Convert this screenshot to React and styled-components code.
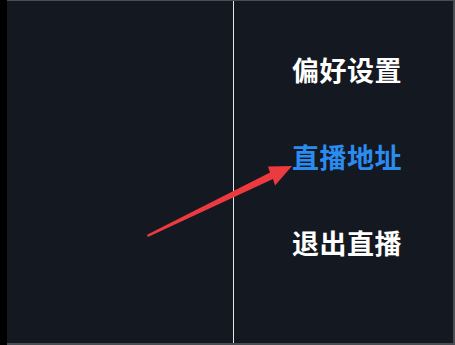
import React from 'react';
import styled, { createGlobalStyle } from 'styled-components';

const GlobalStyle = createGlobalStyle`
  html, body {
    margin: 0;
    padding: 0;
    background: #000;
  }
  #root {
    width: 455px;
    height: 345px;
  }
`;

const Frame = styled.div`
  position: relative;
  display: flex;
  width: 455px;
  height: 345px;
  background: #000;
  font-family: "Noto Sans CJK SC", "Noto Sans", sans-serif;
`;

const Gutter = styled.div`
  width: 7px;
  background: #000;
`;

const Screen = styled.div`
  flex: 1;
  display: flex;
  background: #141820;
  border-top: 1px solid #4a4d52;
  border-right: 2px solid #4a4d52;
  border-bottom: 2px solid #4a4d52;
`;

const LeftPane = styled.div`
  width: 226px;
  border-right: 1px solid #e6e6e6;
`;

const Menu = styled.ul`
  list-style: none;
  margin: 0;
  padding: 26px 0 0 58px;
  display: flex;
  flex-direction: column;
`;

const MenuItem = styled.li`
  height: 86.5px;
  line-height: 86.5px;
  font-size: 27px;
  font-weight: 700;
  letter-spacing: 0.5px;
  color: ${(p) => (p.active ? '#2b8cf0' : '#ffffff')};
  white-space: nowrap;
`;

const Arrow = styled.svg`
  position: absolute;
  left: 0;
  top: 0;
  pointer-events: none;
`;

const items = [
  { label: '偏好设置' },
  { label: '直播地址', active: true },
  { label: '退出直播' },
];

export default function App() {
  return (
    <>
      <GlobalStyle />
      <Frame>
        <Gutter />
        <Screen>
          <LeftPane />
          <Menu>
            {items.map((it) => (
              <MenuItem key={it.label} active={it.active}>
                {it.label}
              </MenuItem>
            ))}
          </Menu>
        </Screen>
        <Arrow width="455" height="345" viewBox="0 0 455 345">
          <polygon
            points="147,236.5 149,236.5 273,179 275,185.5 292,166 268,166.5 270,172.5 147.5,234.5"
            fill="#ec3a3f"
          />
        </Arrow>
      </Frame>
    </>
  );
}
